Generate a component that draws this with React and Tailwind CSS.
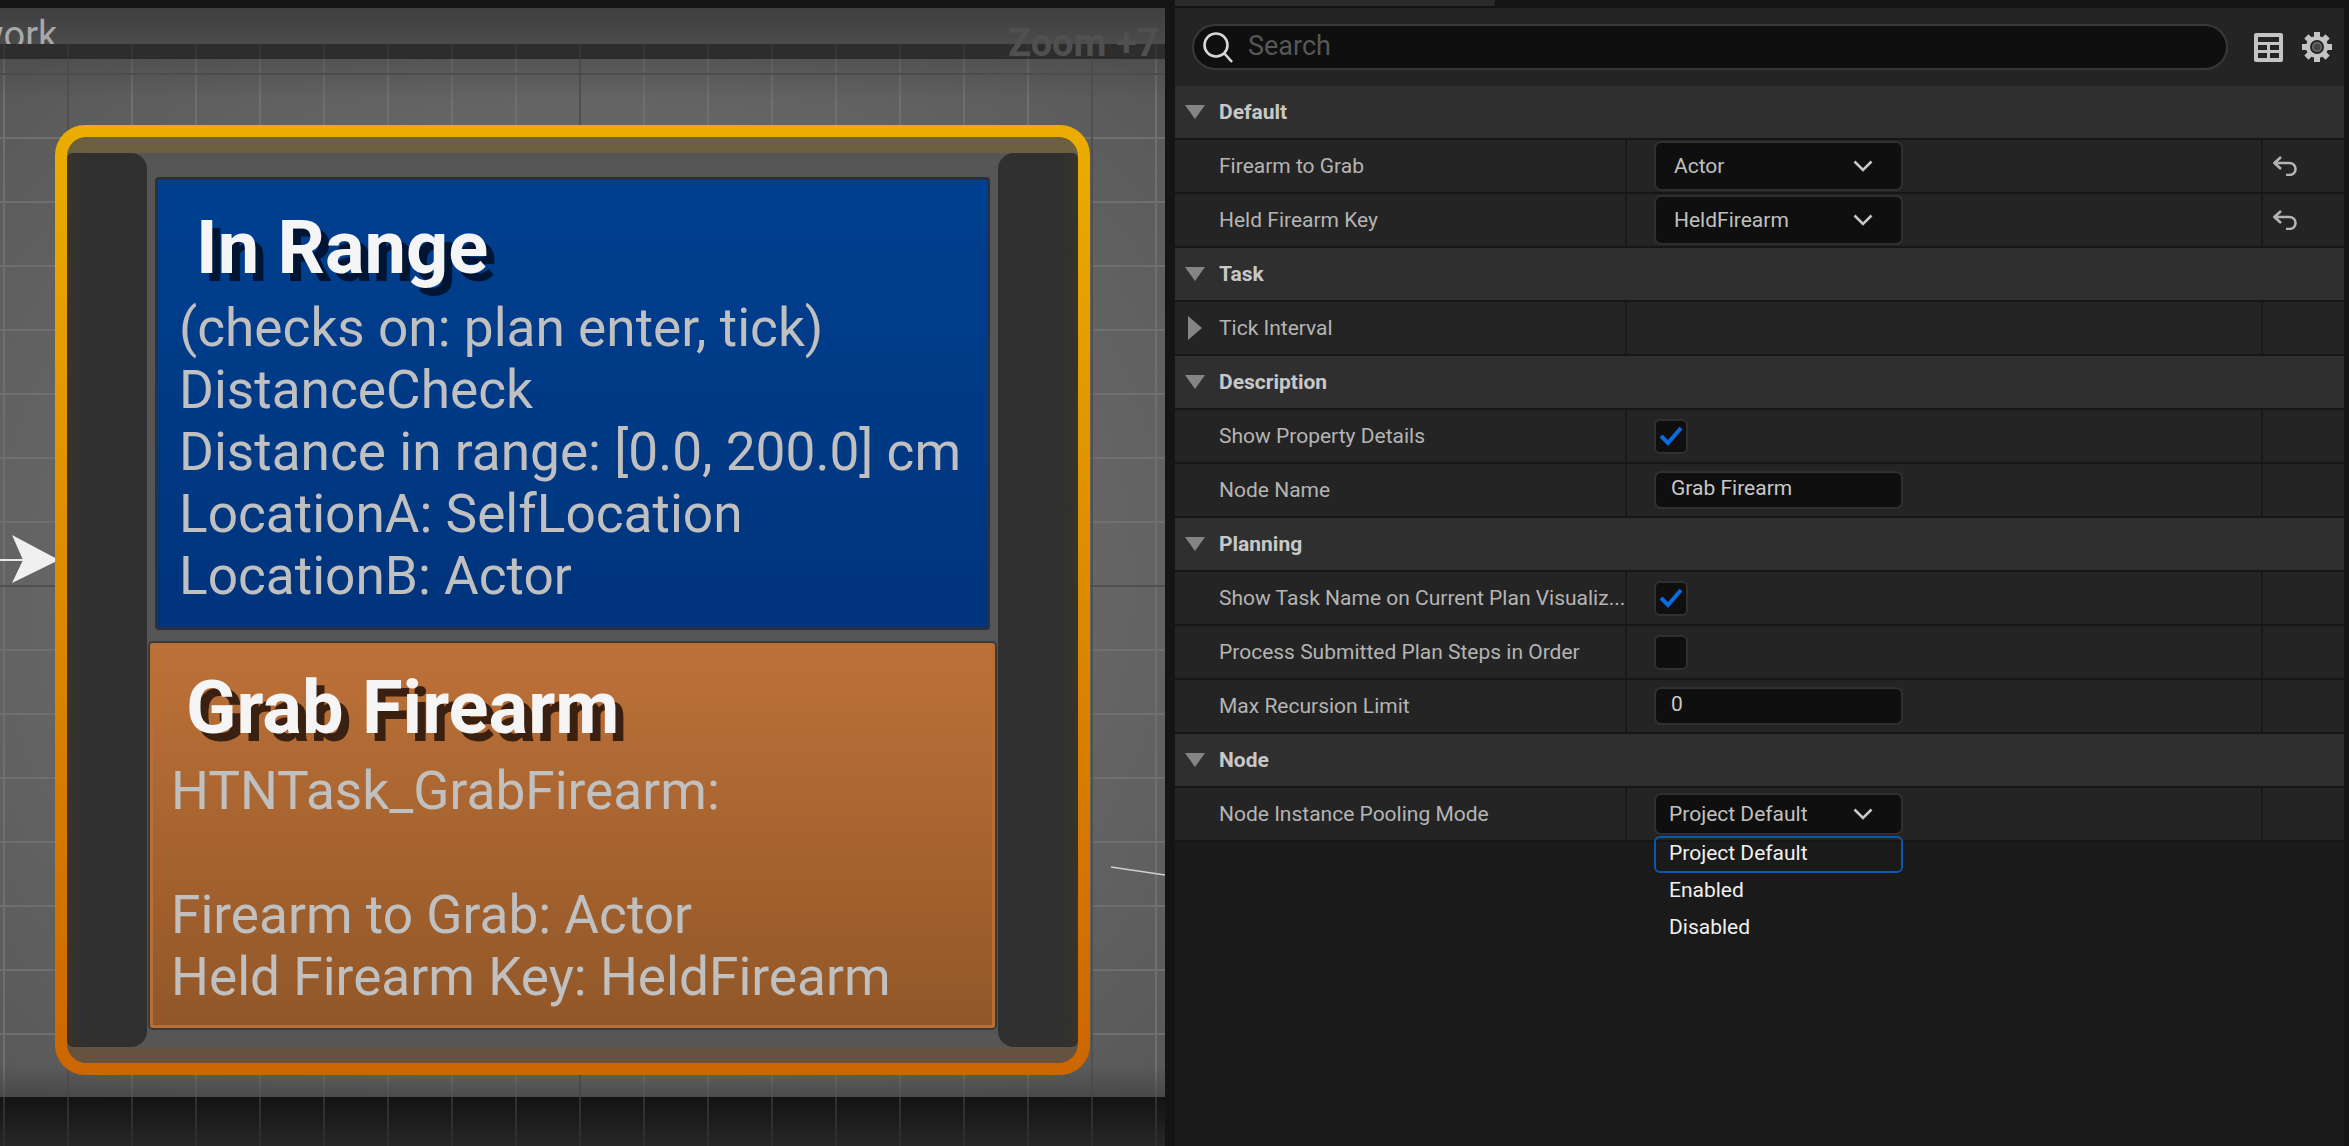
import React from "react";

function Tri({ open = true }) {
  return open ? (
    <svg width="20" height="14" viewBox="0 0 20 14" className="shrink-0"><path d="M0 0H20L10 14Z" fill="#858585" /></svg>
  ) : (
    <svg width="14" height="24" viewBox="0 0 14 24" className="shrink-0 ml-[3px] mr-[3px]"><path d="M0 0L14 12L0 24Z" fill="#858585" /></svg>
  );
}

function Section({ label }) {
  return (
    <div className="h-[54px] flex items-center bg-[#2f2f2f] border-b-2 border-[#161616] pl-[10px]">
      <Tri />
      <span className="ml-[14px] text-[21px] font-bold text-[#c8c8c8] translate-y-[1px]">{label}</span>
    </div>
  );
}

function Chevron() {
  return (
    <svg width="20" height="12" viewBox="0 0 20 12" fill="none" stroke="#c8c8c8" strokeWidth="2.6" className="shrink-0"><path d="M1.5 1.5L10 10L18.5 1.5" /></svg>
  );
}

function Reset() {
  return (
    <svg width="24" height="20" viewBox="0 0 24 20" fill="none" stroke="#b4b4b4" strokeWidth="2.6">
      <path d="M8 1L1.5 7L8 13" />
      <path d="M2 7H16C20 7 22.5 9.5 22.5 13C22.5 16.5 20 19 16 19H13" />
    </svg>
  );
}

function Row({ label, children, reset, tri, labelColor = "text-[#b4b4b4]" }) {
  return (
    <div className="h-[54px] flex bg-[#242424] border-b-2 border-[#161616]">
      <div className="w-[452px] shrink-0 flex items-center pl-[44px] border-r-2 border-[#1a1a1a] overflow-hidden">
        {tri && <div className="-ml-[34px] mr-[14px]"><Tri open={false} /></div>}
        <span className={`text-[21px] whitespace-nowrap translate-y-[1px] ${labelColor}`}>{label}</span>
      </div>
      <div className="w-[636px] shrink-0 flex items-center pl-[27px] border-r-2 border-[#1a1a1a]">{children}</div>
      <div className="flex-1 flex items-center pl-[10px]">{reset && <Reset />}</div>
    </div>
  );
}

function Dropdown({ children, h = "h-[50px]", pad = "pl-[18px]" }) {
  return (
    <div className={`w-[249px] ${h} ${pad} pr-[28px] flex items-center justify-between rounded-[7px] bg-[#0f0f0f] border-2 border-[#2f2f2f] text-[21px] text-[#c0c0c0]`}>
      <span className="translate-y-[1px]">{children}</span>
      <Chevron />
    </div>
  );
}

function Check({ on }) {
  return (
    <div className="w-[34px] h-[35px] rounded-[6px] bg-[#0f0f0f] border-2 border-[#303030] flex items-center justify-center">
      {on && (
        <svg width="24" height="20" viewBox="0 0 24 20" fill="none" stroke="#0b6be0" strokeWidth="4"><path d="M2 10L9 17L22 2" /></svg>
      )}
    </div>
  );
}

function TextInput({ children }) {
  return (
    <div className="w-[249px] h-[38px] pl-[15px] flex items-center rounded-[7px] bg-[#0f0f0f] border-2 border-[#303030] text-[21px] text-[#c8c8c8]">
      <span className="-translate-y-[1px]">{children}</span>
    </div>
  );
}

function Viewport() {
  return (
    <div className="relative w-[1165px] shrink-0 overflow-hidden flex flex-col">
      <div className="h-[36px] shrink-0 bg-gradient-to-b from-[#3f3f3f] to-[#4b4b4b]">
        <div className="text-[38px] leading-[42px] text-[#a8a8a8] -ml-[25px] mt-[6px] whitespace-nowrap">work</div>
      </div>
      <div className="h-[15px] shrink-0 bg-[#2d2d2d] bg-[linear-gradient(to_right,transparent_62px,#353535_62px,#353535_64px)] bg-[size:64px_64px] bg-[position:5px_0]" />
      <div className="h-[1038px] shrink-0 bg-[radial-gradient(ellipse_at_center,#6a6a6a_0%,#666666_60%,#585858_100%)]">
        <div className="h-full bg-[linear-gradient(to_right,transparent_62px,#6f6f6f_62px,#6f6f6f_64px),linear-gradient(to_bottom,transparent_62px,#6f6f6f_62px,#6f6f6f_64px)] bg-[size:64px_64px] bg-[position:5px_16px]">
          <div className="h-full bg-[linear-gradient(to_right,transparent_510px,#505050_510px,#505050_512px),linear-gradient(to_bottom,transparent_510px,#505050_510px,#505050_512px)] bg-[size:512px_512px] bg-[position:69px_16px]">
            <div className="h-full bg-[linear-gradient(to_bottom,#40404066_0%,#40404000_4%,#40404000_97%,#404040aa_100%)]" />
          </div>
        </div>
      </div>
      <div className="flex-1 bg-[linear-gradient(to_bottom,#131313,#272727)]">
        <div className="h-full bg-[linear-gradient(to_right,transparent_62px,#2f2f2f_62px,#2f2f2f_64px)] bg-[size:64px_64px] bg-[position:5px_0]" />
      </div>

      <div className="absolute left-[1008px] top-[13px] text-[38px] leading-[44px] font-bold text-[#505050] whitespace-nowrap">Zoom +7</div>

      <svg className="absolute left-0 top-[527px] blur-[0.6px]" width="60" height="48" viewBox="0 0 60 48">
        <rect x="0" y="24" width="24" height="2" fill="#e8e8e8" />
        <path d="M12 0L59 25L12 48L23 25Z" fill="#f0f0f0" />
      </svg>

      <svg className="absolute left-[1110px] top-[858px]" width="55" height="10" viewBox="0 0 55 10">
        <path d="M1 1L55 9" stroke="#d0d0d0" strokeWidth="1.6" fill="none" />
      </svg>

      <div className="absolute left-[55px] top-[117px] w-[1035px] h-[950px] rounded-[30px] p-[12px] bg-gradient-to-b from-[#ebad00] to-[#cc6600]">
        <div className="h-full rounded-[20px] overflow-hidden bg-[#555555] flex flex-col">
          <div className="h-[16px] shrink-0 bg-[#6b5f40]" />
          <div className="flex-1 flex min-h-0">
            <div className="w-[80px] shrink-0 rounded-l-[6px] rounded-r-[16px] bg-gradient-to-r from-[#38332b] to-[#303030] to-20%" />
            <div className="flex-1 flex flex-col px-[3px]">
              <div className="mt-[24px] mx-[5px] h-[453px] rounded-[4px] border-[3px] border-[#2a3040] bg-gradient-to-b from-[#004090] to-[#00347c] pl-[21px] text-[#c0c0c0] text-[53.2px] leading-[62px]">
                <div className="pl-[17px] pt-[24px] h-[117px] text-[74px] leading-[88px] font-bold text-[#f5f5f5] [text-shadow:8px_8px_0_#001533]">In Range</div>
                <div>(checks on: plan enter, tick)</div>
                <div>DistanceCheck</div>
                <div>Distance in range: [0.0, 200.0] cm</div>
                <div>LocationA: SelfLocation</div>
                <div>LocationB: Actor</div>
              </div>
              <div className="mt-[13px] h-[385px] rounded-[3px] border-[3px] border-[#b86f35] bg-gradient-to-b from-[#bd7138] to-[#925728] pl-[18px] text-[#c0c0c0] text-[53.2px] leading-[62px] shadow-[0_0_0_2px_#3c3a38]">
                <div className="pl-[15px] pt-[18px] h-[114px] text-[74px] leading-[88px] font-bold text-[#f5f5f5] [text-shadow:8px_8px_0_#3a2010]">Grab Firearm</div>
                <div>HTNTask_GrabFirearm:</div>
                <div>&nbsp;</div>
                <div>Firearm to Grab: Actor</div>
                <div>Held Firearm Key: HeldFirearm</div>
              </div>
            </div>
            <div className="w-[80px] shrink-0 rounded-r-[6px] rounded-l-[16px] bg-gradient-to-l from-[#38332b] to-[#303030] to-20%" />
          </div>
          <div className="h-[16px] shrink-0 bg-[#655340]" />
        </div>
      </div>
    </div>
  );
}

function Panel() {
  return (
    <div className="flex-1 bg-[#1a1a1a] flex flex-col">
      <div className="h-[78px] shrink-0 bg-[#242424] flex items-center pl-[17px] pr-[12px]">
        <div className="w-[1036px] h-[46px] rounded-full bg-[#0f0f0f] border-2 border-[#383838] flex items-center pl-[8px]">
          <svg width="32" height="32" viewBox="0 0 32 32" fill="none" stroke="#d8d8d8" strokeWidth="2.6"><circle cx="14" cy="14" r="11.5" /><path d="M22 22L30 31" /></svg>
          <span className="ml-[14px] text-[27px] text-[#575757] -translate-y-[1px]">Search</span>
        </div>
        <svg className="ml-[26px]" width="29" height="29" viewBox="0 0 29 29">
          <rect width="29" height="29" rx="2" fill="#c4c4c4" />
          <rect x="4" y="4" width="21" height="5" fill="#242424" />
          <rect x="4" y="12" width="9" height="5" fill="#242424" />
          <rect x="16" y="12" width="9" height="5" fill="#242424" />
          <rect x="4" y="20" width="9" height="5" fill="#242424" />
          <rect x="16" y="20" width="9" height="5" fill="#242424" />
        </svg>
        <svg className="ml-[19px]" width="30" height="30" viewBox="0 0 30 30">
          <g fill="#c4c4c4">
            <rect x="12" y="0" width="6" height="30" />
            <rect x="12" y="0" width="6" height="30" transform="rotate(45 15 15)" />
            <rect x="12" y="0" width="6" height="30" transform="rotate(90 15 15)" />
            <rect x="12" y="0" width="6" height="30" transform="rotate(135 15 15)" />
            <circle cx="15" cy="15" r="11" />
          </g>
          <circle cx="15" cy="15" r="7" fill="#242424" />
          <circle cx="15" cy="15" r="5" fill="#707070" />
          <circle cx="15" cy="15" r="3.5" fill="#444444" />
        </svg>
      </div>

      <Section label="Default" />
      <Row label="Firearm to Grab" reset><Dropdown>Actor</Dropdown></Row>
      <Row label="Held Firearm Key" reset><Dropdown>HeldFirearm</Dropdown></Row>
      <Section label="Task" />
      <Row label="Tick Interval" tri />
      <Section label="Description" />
      <Row label="Show Property Details"><Check on /></Row>
      <Row label="Node Name"><TextInput>Grab Firearm</TextInput></Row>
      <Section label="Planning" />
      <Row label="Show Task Name on Current Plan Visualiz..."><Check on /></Row>
      <Row label="Process Submitted Plan Steps in Order"><Check /></Row>
      <Row label="Max Recursion Limit"><TextInput>0</TextInput></Row>
      <Section label="Node" />
      <Row label="Node Instance Pooling Mode"><Dropdown h="h-[42px]" pad="pl-[13px]">Project Default</Dropdown></Row>

      <div className="relative flex-1">
        <div className="absolute left-[479px] -top-[6px] w-[249px] flex flex-col text-[21px] text-[#f0f0f0]">
          <div className="h-[37px] pl-[13px] flex items-center rounded-[6px] border-2 border-[#0a58b0]"><span className="-translate-y-[1px]">Project Default</span></div>
          <div className="h-[37px] pl-[15px] flex items-center"><span className="-translate-y-[1px]">Enabled</span></div>
          <div className="h-[37px] pl-[15px] flex items-center"><span className="-translate-y-[1px]">Disabled</span></div>
        </div>
      </div>
    </div>
  );
}

export default function App() {
  return (
    <div className="w-[2349px] h-[1146px] overflow-hidden bg-[#141414] flex flex-col font-['Roboto',sans-serif]">
      <div className="h-[8px] shrink-0 flex">
        <div className="w-[1175px]" />
        <div className="w-[320px] h-[6px] bg-[#2a2a2a]" />
      </div>
      <div className="flex-1 flex min-h-0">
        <Viewport />
        <div className="w-[10px] shrink-0" />
        <Panel />
        <div className="w-[8px] shrink-0" />
      </div>
    </div>
  );
}
